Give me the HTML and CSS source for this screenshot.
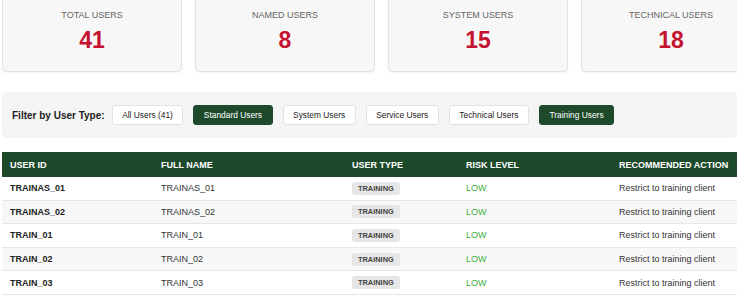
FILE: index.html
```html
<!DOCTYPE html>
<html lang="en">
<head>
  <meta charset="UTF-8" />
  <meta name="viewport" content="width=device-width, initial-scale=1.0"/>
  <title>User Analysis</title>
  <link rel="stylesheet" href="styles.css">
</head>
<body>
  <div class="page">
    <div class="stats">
      <div class="stat-card">
        <div class="stat-label">Total Users</div>
        <div class="stat-value">41</div>
      </div>
      <div class="stat-card">
        <div class="stat-label">Named Users</div>
        <div class="stat-value">8</div>
      </div>
      <div class="stat-card">
        <div class="stat-label">System Users</div>
        <div class="stat-value">15</div>
      </div>
      <div class="stat-card">
        <div class="stat-label">Technical Users</div>
        <div class="stat-value">18</div>
      </div>
    </div>

    <div class="filters">
      <span class="filter-label">Filter by User Type:</span>
      <button class="filter-btn">All Users (41)</button>
      <button class="filter-btn active">Standard Users</button>
      <button class="filter-btn">System Users</button>
      <button class="filter-btn">Service Users</button>
      <button class="filter-btn">Technical Users</button>
      <button class="filter-btn active">Training Users</button>
    </div>

    <table class="users">
      <thead>
        <tr>
          <th class="col-id">User ID</th>
          <th class="col-name">Full Name</th>
          <th class="col-type">User Type</th>
          <th class="col-risk">Risk Level</th>
          <th>Recommended Action</th>
        </tr>
      </thead>
      <tbody>
        <tr>
          <td class="uid">TRAINAS_01</td>
          <td>TRAINAS_01</td>
          <td><span class="badge">Training</span></td>
          <td class="risk-low">LOW</td>
          <td>Restrict to training client</td>
        </tr>
        <tr>
          <td class="uid">TRAINAS_02</td>
          <td>TRAINAS_02</td>
          <td><span class="badge">Training</span></td>
          <td class="risk-low">LOW</td>
          <td>Restrict to training client</td>
        </tr>
        <tr>
          <td class="uid">TRAIN_01</td>
          <td>TRAIN_01</td>
          <td><span class="badge">Training</span></td>
          <td class="risk-low">LOW</td>
          <td>Restrict to training client</td>
        </tr>
        <tr>
          <td class="uid">TRAIN_02</td>
          <td>TRAIN_02</td>
          <td><span class="badge">Training</span></td>
          <td class="risk-low">LOW</td>
          <td>Restrict to training client</td>
        </tr>
        <tr>
          <td class="uid">TRAIN_03</td>
          <td>TRAIN_03</td>
          <td><span class="badge">Training</span></td>
          <td class="risk-low">LOW</td>
          <td>Restrict to training client</td>
        </tr>
      </tbody>
    </table>
  </div>
</body>
</html>
```

FILE: styles.css
```css
body {
  font-family: 'Liberation Sans', Arial, sans-serif;
  background: #fff;
  color: #222;
  margin: 0;
}

.page {
  width: 735px;
  margin-left: 2px;
  margin-top: -22px;
  overflow: hidden;
}

/* cartes de stats */
.stats {
  display: flex;
  gap: 13px;
}

.stat-card {
  flex: 0 0 180px;
  box-sizing: border-box;
  height: 94px;
  padding-top: 31px;
  background: #f7f7f7;
  border: 1px solid #e2e2e2;
  border-radius: 5px;
  box-shadow: 0 1px 2px rgba(0, 0, 0, 0.06);
  text-align: center;
}

.stat-label {
  font-size: 9px;
  color: #666;
  text-transform: uppercase;
  line-height: 11px;
}

.stat-value {
  font-size: 23px;
  font-weight: bold;
  color: #c41230;
  line-height: 26px;
  margin-top: 6px;
}

/* filtres */
.filters {
  margin-top: 20px;
  height: 46px;
  background: #f5f5f5;
  border-radius: 5px;
  display: flex;
  align-items: center;
  padding-left: 10px;
  gap: 10px;
}

.filter-label {
  font-size: 10px;
  font-weight: bold;
  color: #222;
  margin-right: -3px;
}

.filter-btn {
  font-family: inherit;
  font-size: 8.4px;
  height: 20px;
  padding: 0 9.5px;
  background: #fff;
  color: #222;
  border: 1px solid #e2e2e2;
  border-radius: 3px;
}

.filter-btn.active {
  background: #1e4a2c;
  border-color: #1e4a2c;
  color: #fff;
}

/* tableau */
.users {
  margin-top: 14px;
  width: 760px;
  border-collapse: collapse;
  font-size: 9px;
}

.users th {
  background: #1e4a2c;
  color: #fff;
  font-size: 9px;
  font-weight: bold;
  text-transform: uppercase;
  text-align: left;
  height: 25px;
  padding: 0 8px;
}

.col-id { width: 135px; }
.col-name { width: 175px; }
.col-type { width: 98px; }
.col-risk { width: 137px; }

.users td {
  height: 22.6px;
  padding: 0 8px;
  color: #333;
  border-bottom: 1px solid #e6e6e6;
}

.users tbody tr:nth-child(even) td {
  background: #f8f8f8;
}

.users td.uid {
  font-weight: bold;
  color: #222;
}

.users td.risk-low {
  color: #3cb043;
}

.badge {
  display: inline-block;
  background: #e6e6e6;
  color: #444;
  font-size: 7.4px;
  font-weight: bold;
  text-transform: uppercase;
  padding: 2px 6px;
  border-radius: 3px;
}
```
